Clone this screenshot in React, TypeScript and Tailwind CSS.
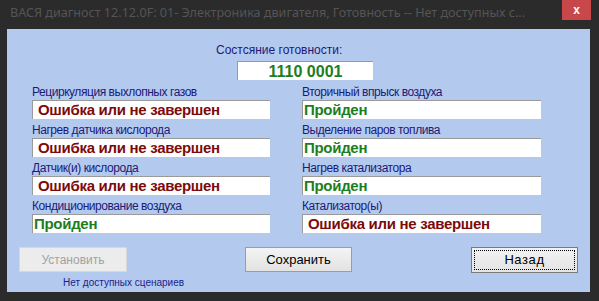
import React from "react";

const FAIL = "Ошибка или не завершен";
const PASS = "Пройден";

type Item = { label: string; ok: boolean };

const left: Item[] = [
  { label: "Рециркуляция выхлопных газов", ok: false },
  { label: "Нагрев датчика кислорода", ok: false },
  { label: "Датчик(и) кислорода", ok: false },
  { label: "Кондиционирование воздуха", ok: true },
];
const right: Item[] = [
  { label: "Вторичный впрыск воздуха", ok: true },
  { label: "Выделение паров топлива", ok: true },
  { label: "Нагрев катализатора", ok: true },
  { label: "Катализатор(ы)", ok: false },
];

function Field({ item }: { item: Item }) {
  return (
    <div className="flex flex-col">
      <div className="h-[19px] leading-[22px] text-[12px] tracking-[-0.45px] text-[#1b1b74] whitespace-nowrap">
        {item.label}
      </div>
      <div
        className={
          "h-[19px] bg-white border-t border-l border-[#9a9a9a] leading-[18px] text-[15px] tracking-[-0.3px] font-bold whitespace-nowrap " +
          (item.ok ? "pl-[1px] text-[#1e7d1e]" : "pl-[5px] text-[#7d0a0a]")
        }
      >
        {item.ok ? PASS : FAIL}
      </div>
    </div>
  );
}

export default function App() {
  return (
    <div
      className="w-[599px] h-[301px] bg-[#2b2b2b] flex flex-col overflow-hidden"
      style={{ fontFamily: '"Liberation Sans", Arial, sans-serif' }}
    >
      <div className="h-[29px] flex items-start shrink-0">
        <div
          className="flex-1 min-w-0 pl-[10px] pt-[4px] text-[12.6px] text-[#555555] whitespace-nowrap"
          style={{ fontFamily: '"Noto Sans", "Open Sans", sans-serif' }}
        >
          ВАСЯ диагност 12.12.0F: 01- Электроника двигателя, Готовность -- Нет доступных с...
        </div>
        <div className="w-[29px] h-[20px] mr-[8px] bg-[#c7474b] flex items-center justify-center text-white text-[12px] font-bold shrink-0">
          x
        </div>
      </div>
      <div className="ml-[7px] mr-[9px] h-[263px] bg-[#b4c9ee] flex flex-col shrink-0">
        <div className="mt-[13px] h-[16px] pl-[209px] text-[12px] leading-[16px] text-[#1b1b74] whitespace-nowrap">
          Состсяние готовности:
        </div>
        <div className="mt-[3px] ml-[230px] w-[136px] h-[19px] bg-white border-t border-l border-[#9a9a9a] text-center text-[16px] font-bold leading-[19px] text-[#1e7d1e]">
          1110 0001
        </div>
        <div className="mt-[1px] ml-[25px] flex gap-[32px]">
          <div className="w-[238px] flex flex-col">
            {left.map((it) => (
              <Field key={it.label} item={it} />
            ))}
          </div>
          <div className="w-[239px] flex flex-col">
            {right.map((it) => (
              <Field key={it.label} item={it} />
            ))}
          </div>
        </div>
        <div className="mt-[14px] flex items-start">
          <div className="ml-[12px] w-[108px] h-[25px] bg-[#ececec] border border-[#d8d8d8] text-[#a2a2a2] text-[12px] flex items-center justify-center">
            Установить
          </div>
          <div className="ml-[118px] w-[107px] h-[25px] bg-gradient-to-b from-[#f4f4f4] to-[#e2e2e2] border border-[#6fa7d6] text-[13px] text-black flex items-center justify-center">
            Сохранить
          </div>
          <div className="ml-[119px] w-[107px] h-[26px] bg-gradient-to-b from-[#f2f2f2] to-[#e4e4e4] border border-[#7a7a7a] p-[2px]">
            <div className="w-full h-full border border-dotted border-black text-[13px] tracking-[0.6px] text-black flex items-center justify-center">
              Назад
            </div>
          </div>
        </div>
        <div className="mt-[4px] pl-[56px] text-[10px] leading-[12px] text-[#1b1b8a] whitespace-nowrap">
          Нет доступных сценариев
        </div>
      </div>
    </div>
  );
}
